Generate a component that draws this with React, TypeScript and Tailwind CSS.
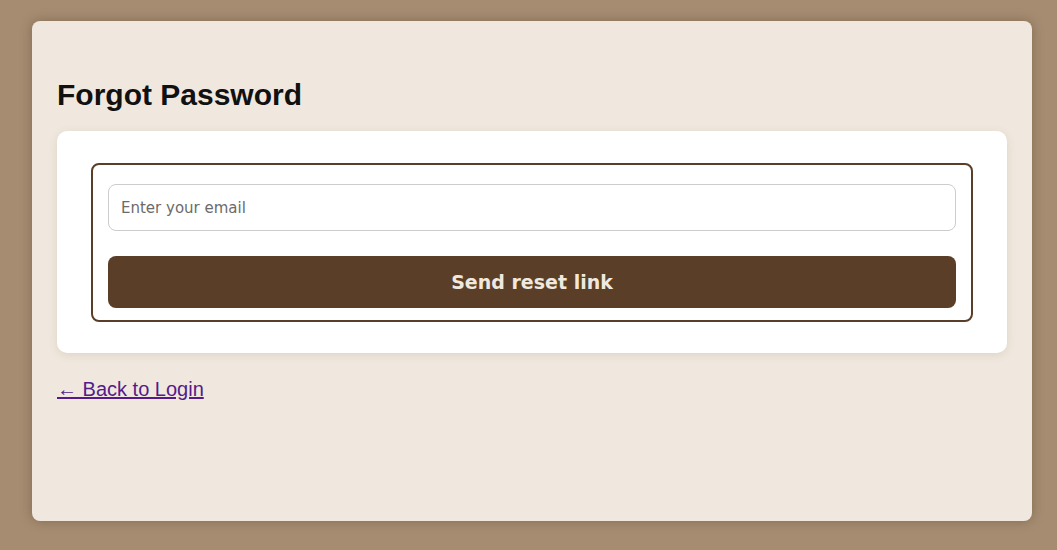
import React from "react";

export default function App() {
  return (
    <div className="min-h-[550px] w-full bg-[#a68d72] pt-[21px] pb-[29px] pl-[32px]" style={{ fontFamily: '"Liberation Sans", Arial, sans-serif' }}>
      <div className="w-[1000px] h-[500px] bg-[#f0e8de] rounded-[8px] shadow-[0_0_12px_rgba(60,40,20,0.35)] px-[25px] pt-[57px]">
        <h1 className="text-[30px] leading-[34px] font-bold text-[#111]">Forgot Password</h1>

        <div className="mt-[19px] bg-white rounded-[10px] shadow-[0_2px_10px_rgba(90,62,40,0.12)] px-[34px] pt-[32px] pb-[31px]">
          <form
            className="border-2 border-[#5a3e28] rounded-[8px] pt-[19px] pb-[12px] px-[15px] flex flex-col gap-[25px]"
            onSubmit={(e) => e.preventDefault()}
          >
            <input
              type="email"
              placeholder="Enter your email"
              className="h-[47px] w-full rounded-[8px] border border-[#cccccc] px-[12px] text-[15px] text-[#333] placeholder:text-[#6b6b6b] outline-none"
              style={{ fontFamily: '"DejaVu Sans", Tahoma, sans-serif' }}
            />
            <button
              type="submit"
              className="h-[52px] w-full rounded-[8px] bg-[#5a3e28] text-[#f0e8de] text-[19px] font-bold"
              style={{ fontFamily: '"DejaVu Sans", Tahoma, sans-serif' }}
            >
              Send reset link
            </button>
          </form>
        </div>

        <a href="#" className="inline-block mt-[25px] text-[20px] leading-[23px] text-[#551a8b] underline">
          ← Back to Login
        </a>
      </div>
    </div>
  );
}
